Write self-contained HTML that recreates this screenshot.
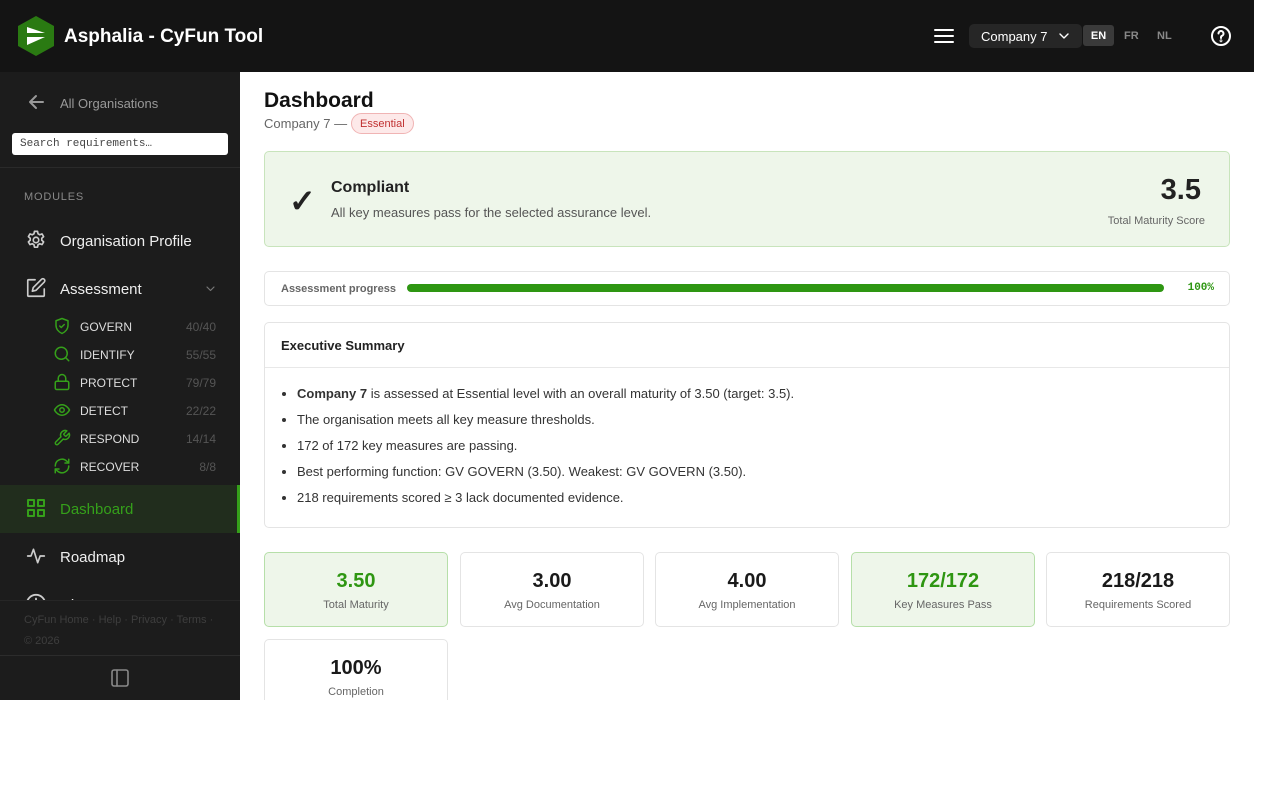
<!DOCTYPE html>
<html><head><meta charset="utf-8"><style>
*{box-sizing:border-box;margin:0;padding:0}
body{width:1280px;height:800px;background:#fff;font-family:"Liberation Sans",sans-serif;position:relative;overflow:hidden}
.app{position:absolute;left:0;top:0;width:1254px;height:700px;overflow:hidden;background:#fff}
.hdr{position:absolute;left:0;top:0;width:1254px;height:72px;background:#141414;color:#fff}
.side{position:absolute;left:0;top:72px;width:240px;height:628px;background:#1c1c1c;color:#ddd;overflow:hidden}
.main{position:absolute;left:264px;top:72px;width:966px}
.abs{position:absolute}
.ic{position:absolute;fill:none;stroke-linecap:round;stroke-linejoin:round}
.sub{position:absolute;left:80px;font-size:12px;color:#ddd}
.cnt{position:absolute;right:24px;font-size:12px;color:#555}
.card{position:absolute;width:184px;height:75px;border:1px solid #e4e4e4;border-radius:5px;text-align:center;background:#fff}
.card b{display:block;margin-top:17px;font-size:20px;color:#1a1a1a}
.card span{display:block;margin-top:6px;font-size:11px;color:#666}
.card.g{background:#eef6ea;border-color:#b6dfa9}
.card.g b{color:#2e9612}
li{font-size:13px;color:#333;margin-bottom:11px;margin-left:16px}
</style></head><body><div class="app">
<div class="hdr">
 <svg class="abs" style="left:18px;top:16px" width="36" height="40" viewBox="0 0 36 40"><polygon points="18,0 36,10 36,30 18,40 0,30 0,10" fill="#2a7a12"/><polygon points="9,11 27,17 9,17" fill="#fff"/><polygon points="9,21 27,21 9,29" fill="#fff"/></svg>
 <div class="abs" style="left:64px;top:26px;font-size:19px;font-weight:bold">Asphalia - CyFun Tool</div>
 <svg class="ic" style="left:934px;top:28px" width="20" height="16" stroke="#fff" stroke-width="2"><path d="M1 2h18M1 8h18M1 14h18"/></svg>
 <div class="abs" style="left:969px;top:24px;width:113px;height:24px;background:#262626;border-radius:5px;font-size:13px;padding:5px 0 0 12px">Company 7</div>
 <svg class="ic" style="left:1059px;top:32px" width="10" height="8" stroke="#fff" stroke-width="1.4"><path d="M1 2l4 4 4-4"/></svg>
 <div class="abs" style="left:1083px;top:25px;width:31px;height:21px;background:#3a3a3a;border-radius:3px;font-size:11px;font-weight:bold;text-align:center;line-height:22px">EN</div>
 <div class="abs" style="left:1124px;top:30px;font-size:11px;font-weight:bold;color:#888">FR</div>
 <div class="abs" style="left:1157px;top:30px;font-size:11px;font-weight:bold;color:#888">NL</div>
 <svg class="ic" style="left:1210px;top:25px" width="22" height="22" stroke="#fff" stroke-width="2"><circle cx="11" cy="11" r="9"/><path d="M8.5 8.5a2.5 2.5 0 1 1 3.5 2.3c-.7.3-1 .8-1 1.5v.7"/><circle cx="11" cy="15.8" r=".4"/></svg>
</div>
<div class="side">
 <svg class="ic" style="left:28px;top:22px" width="16" height="16" stroke="#999" stroke-width="2"><path d="M15 8H2M8 2L2 8l6 6"/></svg>
 <div class="abs" style="left:60px;top:24px;font-size:13px;color:#999">All Organisations</div>
 <div class="abs" style="left:12px;top:61px;width:216px;height:22px;background:#fff;border-radius:3px;font-family:'Liberation Mono',monospace;font-size:11px;color:#444;padding:5px 8px">Search requirements…</div>
 <div class="abs" style="left:0;top:95px;width:240px;border-top:1px solid #2a2a2a"></div>
 <div class="abs" style="left:24px;top:119px;font-size:11px;color:#888;letter-spacing:.8px">MODULES</div>
 <svg class="ic" style="left:25px;top:157px" width="22" height="22" viewBox="0 0 24 24" stroke="#ccc" stroke-width="1.8"><circle cx="12" cy="12" r="3"/><path d="M10.3 2.6h3.4l.5 2.6 1.9 1.1 2.5-.9 1.7 2.9-2 1.8v2.2l2 1.8-1.7 2.9-2.5-.9-1.9 1.1-.5 2.6h-3.4l-.5-2.6-1.9-1.1-2.5.9-1.7-2.9 2-1.8v-2.2l-2-1.8 1.7-2.9 2.5.9 1.9-1.1z"/></svg>
 <div class="abs" style="left:60px;top:161px;font-size:15px;color:#eee">Organisation Profile</div>
 <svg class="ic" style="left:25px;top:205px" width="22" height="22" viewBox="0 0 24 24" stroke="#ccc" stroke-width="1.8"><path d="M11 3H4a1 1 0 0 0-1 1v16a1 1 0 0 0 1 1h16a1 1 0 0 0 1-1v-7"/><path d="M18 2.5a2.1 2.1 0 0 1 3 3L12 14.5l-4 1 1-4z"/></svg>
 <div class="abs" style="left:60px;top:209px;font-size:15px;color:#eee">Assessment</div>
 <svg class="ic" style="left:206px;top:214px" width="9" height="6" stroke="#777" stroke-width="1.2"><path d="M1 1l3.5 3.5L8 1"/></svg>
 <svg class="ic" style="left:53px;top:245px" width="18" height="18" viewBox="0 0 24 24" stroke="#35a01a" stroke-width="2"><path d="M12 2l8 3v6c0 5-3.5 9-8 11-4.5-2-8-6-8-11V5z"/><path d="M9 12l2 2 4-4"/></svg>
 <div class="sub" style="top:248px">GOVERN</div><div class="cnt" style="top:248px">40/40</div>
 <svg class="ic" style="left:53px;top:273px" width="18" height="18" viewBox="0 0 24 24" stroke="#35a01a" stroke-width="2"><circle cx="11" cy="11" r="8"/><path d="M21 21l-4.3-4.3"/></svg>
 <div class="sub" style="top:276px">IDENTIFY</div><div class="cnt" style="top:276px">55/55</div>
 <svg class="ic" style="left:53px;top:301px" width="18" height="18" viewBox="0 0 24 24" stroke="#35a01a" stroke-width="2"><rect x="3" y="11" width="18" height="11" rx="2"/><path d="M7 11V7a5 5 0 0 1 10 0v4"/></svg>
 <div class="sub" style="top:304px">PROTECT</div><div class="cnt" style="top:304px">79/79</div>
 <svg class="ic" style="left:53px;top:329px" width="18" height="18" viewBox="0 0 24 24" stroke="#35a01a" stroke-width="2"><path d="M2 12s3.5-7 10-7 10 7 10 7-3.5 7-10 7S2 12 2 12z"/><circle cx="12" cy="12" r="3"/></svg>
 <div class="sub" style="top:332px">DETECT</div><div class="cnt" style="top:332px">22/22</div>
 <svg class="ic" style="left:53px;top:357px" width="18" height="18" viewBox="0 0 24 24" stroke="#35a01a" stroke-width="2"><path d="M14.7 6.3a1 1 0 0 0 0 1.4l1.6 1.6a1 1 0 0 0 1.4 0l3.8-3.8a6 6 0 0 1-7.9 7.9l-6.9 6.9a2.1 2.1 0 0 1-3-3l6.9-6.9a6 6 0 0 1 7.9-7.9z"/></svg>
 <div class="sub" style="top:360px">RESPOND</div><div class="cnt" style="top:360px">14/14</div>
 <svg class="ic" style="left:53px;top:385px" width="18" height="18" viewBox="0 0 24 24" stroke="#35a01a" stroke-width="2"><path d="M21 3v5h-5"/><path d="M3 12a9 9 0 0 1 15-6.7L21 8"/><path d="M3 21v-5h5"/><path d="M21 12a9 9 0 0 1-15 6.7L3 16"/></svg>
 <div class="sub" style="top:388px">RECOVER</div><div class="cnt" style="top:388px">8/8</div>
 <div class="abs" style="left:0;top:413px;width:240px;height:48px;background:#212d1d;border-right:3px solid #35a01a"></div>
 <svg class="ic" style="left:26px;top:426px" width="20" height="20" viewBox="0 0 20 20" stroke="#35a01a" stroke-width="2"><rect x="2" y="2" width="6" height="6"/><rect x="12" y="2" width="6" height="6"/><rect x="2" y="12" width="6" height="6"/><rect x="12" y="12" width="6" height="6"/></svg>
 <div class="abs" style="left:60px;top:429px;font-size:15px;color:#35a01a">Dashboard</div>
 <svg class="ic" style="left:26px;top:474px" width="20" height="20" viewBox="0 0 24 24" stroke="#ccc" stroke-width="2"><path d="M2 12h4l3-8 5 16 3-8h5"/></svg>
 <div class="abs" style="left:60px;top:477px;font-size:15px;color:#eee">Roadmap</div>
 <svg class="ic" style="left:25px;top:521px" width="22" height="22" viewBox="0 0 24 24" stroke="#ccc" stroke-width="2"><circle cx="12" cy="12" r="10"/><path d="M12 6v6l4 2"/></svg>
 <div class="abs" style="left:60px;top:525px;font-size:15px;color:#eee">History</div>
 <div class="abs" style="left:0;top:528px;width:240px;height:100px;background:#1c1c1c;border-top:1px solid #262626"></div>
 <div class="abs" style="left:24px;top:538px;font-size:11px;color:#3e3e3e;line-height:21px;width:200px">CyFun Home · Help · Privacy · Terms · © 2026</div>
 <div class="abs" style="left:0;top:583px;width:240px;border-top:1px solid #2c2c2c"></div>
 <svg class="ic" style="left:111px;top:597px" width="18" height="18" stroke="#888" stroke-width="1.6"><rect x="1" y="1" width="16" height="16" rx="2"/><path d="M6 1v16"/></svg>
</div>
<div class="main">
 <div class="abs" style="left:0;top:17px;font-size:21px;font-weight:bold;color:#111">Dashboard</div>
 <div class="abs" style="left:0;top:44px;font-size:13px;color:#666">Company 7 —</div>
 <div class="abs" style="left:87px;top:41px;height:21px;padding:0 8px;border:1px solid #f0b4b4;background:#fde9e9;border-radius:11px;font-size:11px;color:#c03030;line-height:20px">Essential</div>
 <div class="abs" style="left:0;top:79px;width:966px;height:96px;background:#eef6ea;border:1px solid #c8e4bc;border-radius:5px">
  <div class="abs" style="left:24px;top:30px;font-size:32px;font-weight:bold;color:#222">✓</div>
  <div class="abs" style="left:66px;top:27px;font-size:16px;font-weight:bold;color:#222">Compliant</div>
  <div class="abs" style="left:66px;top:53px;font-size:13px;color:#555">All key measures pass for the selected assurance level.</div>
  <div class="abs" style="right:24px;top:22px;width:120px;text-align:right;font-size:29px;font-weight:bold;color:#222;padding-right:4px">3.5</div>
  <div class="abs" style="right:24px;top:63px;font-size:11px;color:#666">Total Maturity Score</div>
 </div>
 <div class="abs" style="left:0;top:199px;width:966px;height:35px;border:1px solid #e4e4e4;border-radius:5px">
  <div class="abs" style="left:16px;top:11px;font-size:11px;font-weight:bold;color:#666">Assessment progress</div>
  <div class="abs" style="left:142px;top:12px;width:757px;height:8px;background:#2e9612;border-radius:4px"></div>
  <div class="abs" style="right:15px;top:10px;font-family:'Liberation Mono',monospace;font-size:11px;font-weight:bold;color:#2e9612">100%</div>
 </div>
 <div class="abs" style="left:0;top:250px;width:966px;height:206px;border:1px solid #e4e4e4;border-radius:5px">
  <div class="abs" style="left:16px;top:15px;font-size:13px;font-weight:bold;color:#222">Executive Summary</div>
  <div class="abs" style="left:0;top:44px;width:964px;border-top:1px solid #e8e8e8"></div>
  <ul class="abs" style="left:16px;top:63px">
   <li><b>Company 7</b> is assessed at Essential level with an overall maturity of 3.50 (target: 3.5).</li>
   <li>The organisation meets all key measure thresholds.</li>
   <li>172 of 172 key measures are passing.</li>
   <li>Best performing function: GV GOVERN (3.50). Weakest: GV GOVERN (3.50).</li>
   <li>218 requirements scored ≥ 3 lack documented evidence.</li>
  </ul>
 </div>
 <div class="card g" style="left:0;top:480px"><b>3.50</b><span>Total Maturity</span></div>
 <div class="card" style="left:196px;top:480px"><b>3.00</b><span>Avg Documentation</span></div>
 <div class="card" style="left:391px;top:480px"><b>4.00</b><span>Avg Implementation</span></div>
 <div class="card g" style="left:587px;top:480px"><b>172/172</b><span>Key Measures Pass</span></div>
 <div class="card" style="left:782px;top:480px"><b>218/218</b><span>Requirements Scored</span></div>
 <div class="card" style="left:0;top:567px"><b>100%</b><span>Completion</span></div>
</div>
</div></body></html>
